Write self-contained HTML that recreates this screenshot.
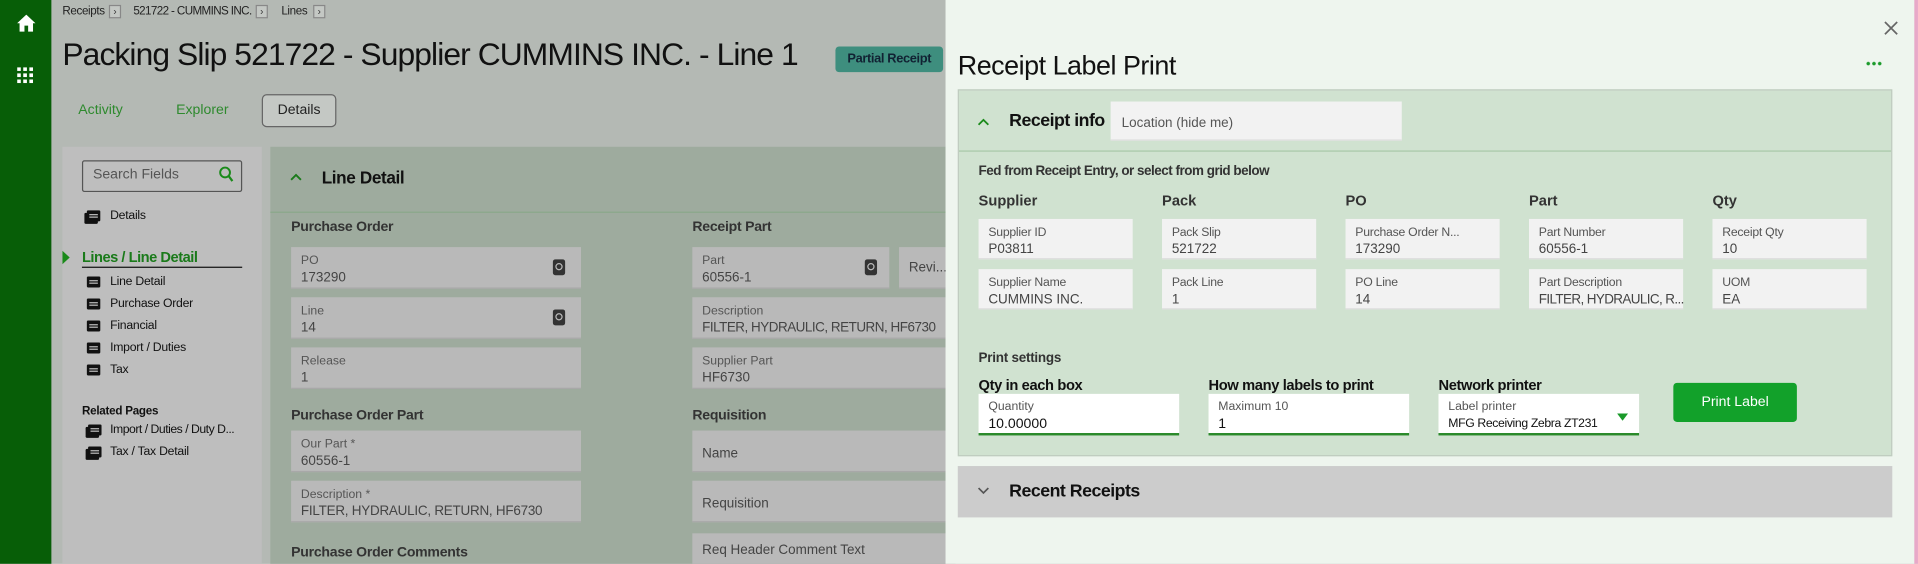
<!DOCTYPE html>
<html><head><meta charset="utf-8"><style>
*{box-sizing:border-box;margin:0;padding:0}
html,body{width:1918px;height:564px;overflow:hidden;background:#fff}
#w{position:absolute;left:0;top:0;width:1568px;height:461px;transform:scale(1.2232);transform-origin:0 0;font-family:"Liberation Sans",sans-serif;background:#b4b9b4;overflow:hidden}
.a{position:absolute;white-space:nowrap}
.nav{left:0;top:0;width:42px;height:461px;background:#075e07}
.bc{font-size:9.5px;color:#222;top:4px;letter-spacing:-.3px}
.chev{width:10px;height:11px;border:1px solid #888;background:#c4c8c4;font-size:8px;line-height:9px;text-align:center;color:#333;top:4px}
.lp{left:51px;top:120px;width:163px;height:341px;background:#bebebe}
.mc{left:221px;top:120px;width:560px;height:341px;background:#9eab9e}
.f{background:#b9b9b9;border-bottom:1px solid #a8a8a8}
.fl{font-size:10px;color:#555}
.fv{font-size:11px;color:#444}
.sh{font-size:11.5px;font-weight:bold;color:#333;letter-spacing:-.2px}
.li{font-size:10px;color:#111;letter-spacing:-.2px}
.ic{width:11px;height:9px;background:#111;border-radius:1px}
.ic:after{content:"";position:absolute;left:2px;top:3px;width:7px;height:1px;background:#bebebe;box-shadow:0 2px 0 #bebebe}
.q{width:10px;height:13px;background:#333;border-radius:2px}
.q:after{content:"";position:absolute;left:2px;top:3px;width:4px;height:4px;border:1px solid #bbb;border-radius:50%}
.modal{left:773px;top:0;width:795px;height:461px;background:#eef5ee;border-right:3px solid #e8a8c8}
.mf{background:#f2f2f2;border-bottom:1px solid #ddd;width:126px;height:33px}
.mf .l{position:absolute;left:8px;top:6px;font-size:10px;color:#555;letter-spacing:-.2px}
.mf .v{position:absolute;left:8px;top:19px;font-size:11px;color:#444}
.in{background:#fff;border-bottom:2px solid #2a8a2a;width:164px;height:34px}
.in .l{position:absolute;left:8px;top:5px;font-size:10px;color:#555}
.in .v{position:absolute;left:8px;top:19px;font-size:11.5px;color:#111}
.ch{font-size:12px;font-weight:bold;color:#333;top:157px}
.lh{font-size:12px;font-weight:bold;color:#111;top:308px;letter-spacing:-.3px}
</style></head><body><div id="w">
<div class="a nav"></div>
<svg class="a" style="left:14px;top:12px" width="15" height="14" viewBox="0 0 15 14"><path d="M7.5 0L0 7h2v7h4V9h3v5h4V7h2z" fill="#fff"/></svg>
<svg class="a" style="left:14px;top:55px" width="13" height="13" viewBox="0 0 13 13" fill="#fff"><rect x="0" y="0" width="3" height="3"/><rect x="5" y="0" width="3" height="3"/><rect x="10" y="0" width="3" height="3"/><rect x="0" y="5" width="3" height="3"/><rect x="5" y="5" width="3" height="3"/><rect x="10" y="5" width="3" height="3"/><rect x="0" y="10" width="3" height="3"/><rect x="5" y="10" width="3" height="3"/><rect x="10" y="10" width="3" height="3"/></svg>
<div class="a bc" style="left:51px">Receipts</div><div class="a chev" style="left:89px">›</div>
<div class="a bc" style="left:109px;letter-spacing:-.5px">521722 - CUMMINS INC.</div><div class="a chev" style="left:209px">›</div>
<div class="a bc" style="left:230px">Lines</div><div class="a chev" style="left:256px">›</div>
<div class="a" style="left:51px;top:29px;font-size:26px;color:#111;letter-spacing:-.75px">Packing Slip 521722 - Supplier CUMMINS INC. - Line 1</div>
<div class="a" style="left:683px;top:38px;width:88px;height:21px;background:#3e8e7e;border-radius:3px;font-size:10.5px;font-weight:bold;color:#123;text-align:center;line-height:21px;letter-spacing:-.3px">Partial Receipt</div>
<div class="a" style="left:64px;top:84px;font-size:11.5px;color:#2e8a2e">Activity</div>
<div class="a" style="left:144px;top:84px;font-size:11.5px;color:#2e8a2e">Explorer</div>
<div class="a" style="left:214px;top:77px;width:61px;height:27px;border:1px solid #666;border-radius:4px;background:#c4c8c4;font-size:11.5px;text-align:center;line-height:25px;color:#222">Details</div>
<div class="a lp"></div>
<div class="a" style="left:67px;top:131px;width:131px;height:26px;border:1px solid #555;border-radius:2px"></div>
<div class="a" style="left:76px;top:137px;font-size:11.5px;color:#555">Search Fields</div>
<svg class="a" style="left:179px;top:136px" width="12" height="13" viewBox="0 0 12 13"><circle cx="5" cy="5" r="4" stroke="#1a8a1a" stroke-width="1.6" fill="none"/><path d="M8 8l3 4" stroke="#1a8a1a" stroke-width="1.8"/></svg>
<div class="a ic" style="left:71px;top:172px;box-shadow:-2px 2px 0 #111"></div><div class="a li" style="left:90px;top:171px">Details</div>
<svg class="a" style="left:51px;top:205px" width="6" height="11"><path d="M0 0l6 5.5L0 11z" fill="#1a8a1a"/></svg>
<div class="a" style="left:67px;top:203px;font-size:12px;font-weight:bold;color:#1a7a1a;letter-spacing:-.4px">Lines / Line Detail</div>
<div class="a" style="left:67px;top:218px;width:131px;height:1px;background:#111"></div>
<div class="a ic" style="left:71px;top:226px"></div><div class="a li" style="left:90px;top:225px">Line Detail</div>
<div class="a ic" style="left:71px;top:244px"></div><div class="a li" style="left:90px;top:243px">Purchase Order</div>
<div class="a ic" style="left:71px;top:262px"></div><div class="a li" style="left:90px;top:261px">Financial</div>
<div class="a ic" style="left:71px;top:280px"></div><div class="a li" style="left:90px;top:279px">Import / Duties</div>
<div class="a ic" style="left:71px;top:298px"></div><div class="a li" style="left:90px;top:297px">Tax</div>
<div class="a" style="left:67px;top:331px;font-size:9.5px;font-weight:bold;color:#111;letter-spacing:-.2px">Related Pages</div>
<div class="a ic" style="left:72px;top:347px;box-shadow:-2px 2px 0 #111"></div><div class="a li" style="left:90px;top:346px;letter-spacing:-.4px">Import / Duties / Duty D...</div>
<div class="a ic" style="left:72px;top:365px;box-shadow:-2px 2px 0 #111"></div><div class="a li" style="left:90px;top:364px">Tax / Tax Detail</div>
<div class="a mc"></div>
<div class="a" style="left:221px;top:173px;width:560px;height:1px;background:#8aa88a"></div>
<svg class="a" style="left:237px;top:141px" width="10" height="7"><path d="M1 6l4-4 4 4" stroke="#1a7a1a" stroke-width="1.5" fill="none"/></svg>
<div class="a" style="left:263px;top:137px;font-size:14px;font-weight:bold;color:#111;letter-spacing:-.3px">Line Detail</div>
<div class="a sh" style="left:238px;top:180px">Purchase Order</div>
<div class="a sh" style="left:566px;top:180px">Receipt Part</div>
<div class="a f" style="left:238px;top:202px;width:237px;height:34px"><span class="a fl" style="left:8px;top:6px">PO</span><span class="a fv" style="left:8px;top:19px">173290</span><span class="a q" style="left:214px;top:10px"></span></div>
<div class="a f" style="left:238px;top:243px;width:237px;height:34px"><span class="a fl" style="left:8px;top:6px">Line</span><span class="a fv" style="left:8px;top:19px">14</span><span class="a q" style="left:214px;top:10px"></span></div>
<div class="a f" style="left:238px;top:284px;width:237px;height:34px"><span class="a fl" style="left:8px;top:6px">Release</span><span class="a fv" style="left:8px;top:19px">1</span></div>
<div class="a sh" style="left:238px;top:334px">Purchase Order Part</div>
<div class="a f" style="left:238px;top:352px;width:237px;height:34px"><span class="a fl" style="left:8px;top:6px">Our Part *</span><span class="a fv" style="left:8px;top:19px">60556-1</span></div>
<div class="a f" style="left:238px;top:393px;width:237px;height:34px"><span class="a fl" style="left:8px;top:6px">Description *</span><span class="a fv" style="left:8px;top:19px;letter-spacing:-.2px">FILTER, HYDRAULIC, RETURN, HF6730</span></div>
<div class="a sh" style="left:238px;top:446px">Purchase Order Comments</div>
<div class="a f" style="left:566px;top:202px;width:161px;height:34px"><span class="a fl" style="left:8px;top:6px">Part</span><span class="a fv" style="left:8px;top:19px">60556-1</span><span class="a q" style="left:141px;top:10px"></span></div>
<div class="a f" style="left:735px;top:202px;width:50px;height:34px"><span class="a fv" style="left:8px;top:11px">Revi...</span></div>
<div class="a f" style="left:566px;top:243px;width:215px;height:34px"><span class="a fl" style="left:8px;top:6px">Description</span><span class="a fv" style="left:8px;top:19px;letter-spacing:-.4px">FILTER, HYDRAULIC, RETURN, HF6730</span></div>
<div class="a f" style="left:566px;top:284px;width:215px;height:34px"><span class="a fl" style="left:8px;top:6px">Supplier Part</span><span class="a fv" style="left:8px;top:19px">HF6730</span></div>
<div class="a sh" style="left:566px;top:334px">Requisition</div>
<div class="a f" style="left:566px;top:352px;width:215px;height:34px"><span class="a fv" style="left:8px;top:13px">Name</span></div>
<div class="a f" style="left:566px;top:393px;width:215px;height:34px"><span class="a fv" style="left:8px;top:13px">Requisition</span></div>
<div class="a f" style="left:566px;top:436px;width:215px;height:30px"><span class="a fv" style="left:8px;top:8px">Req Header Comment Text</span></div>

<div class="a modal"></div>
<svg class="a" style="left:1540px;top:17px" width="12" height="12"><path d="M1 1l10 10M11 1L1 11" stroke="#666" stroke-width="1.4"/></svg>
<div class="a" style="left:783px;top:41px;font-size:22px;color:#111;letter-spacing:-.4px">Receipt Label Print</div>
<div class="a" style="left:1525px;top:50px;width:14px;height:4px;background:radial-gradient(circle,#1a9a2a 1.3px,transparent 1.6px) 0 0/4.7px 4px"></div>
<div class="a" style="left:783px;top:73px;width:764px;height:300px;background:#d0e2d0;border:1px solid #c0ccc0"></div>
<div class="a" style="left:784px;top:123px;width:762px;height:1px;background:#a8c8a8"></div>
<svg class="a" style="left:799px;top:96px" width="10" height="7"><path d="M1 6l4-4 4 4" stroke="#1a8a1a" stroke-width="1.5" fill="none"/></svg>
<div class="a" style="left:825px;top:91px;font-size:14.5px;font-weight:bold;color:#111;letter-spacing:-.4px">Receipt info</div>
<div class="a" style="left:908px;top:83px;width:238px;height:32px;background:#f2f2f2;border-bottom:1px solid #ddd"></div>
<div class="a" style="left:917px;top:95px;font-size:11px;color:#555">Location (hide me)</div>
<div class="a" style="left:800px;top:134px;font-size:11px;font-weight:bold;color:#333;letter-spacing:-.4px">Fed from Receipt Entry, or select from grid below</div>
<div class="a ch" style="left:800px">Supplier</div><div class="a ch" style="left:950px">Pack</div><div class="a ch" style="left:1100px">PO</div><div class="a ch" style="left:1250px">Part</div><div class="a ch" style="left:1400px">Qty</div>
<div class="a mf" style="left:800px;top:179px"><span class="l">Supplier ID</span><span class="v">P03811</span></div>
<div class="a mf" style="left:950px;top:179px"><span class="l">Pack Slip</span><span class="v">521722</span></div>
<div class="a mf" style="left:1100px;top:179px"><span class="l">Purchase Order N...</span><span class="v">173290</span></div>
<div class="a mf" style="left:1250px;top:179px"><span class="l">Part Number</span><span class="v">60556-1</span></div>
<div class="a mf" style="left:1400px;top:179px"><span class="l">Receipt Qty</span><span class="v">10</span></div>
<div class="a mf" style="left:800px;top:220px"><span class="l">Supplier Name</span><span class="v">CUMMINS INC.</span></div>
<div class="a mf" style="left:950px;top:220px"><span class="l">Pack Line</span><span class="v">1</span></div>
<div class="a mf" style="left:1100px;top:220px"><span class="l">PO Line</span><span class="v">14</span></div>
<div class="a mf" style="left:1250px;top:220px"><span class="l">Part Description</span><span class="v" style="letter-spacing:-.5px">FILTER, HYDRAULIC, R...</span></div>
<div class="a mf" style="left:1400px;top:220px"><span class="l">UOM</span><span class="v">EA</span></div>
<div class="a" style="left:800px;top:287px;font-size:11px;color:#333;font-weight:bold;letter-spacing:-.2px">Print settings</div>
<div class="a lh" style="left:800px">Qty in each box</div>
<div class="a lh" style="left:988px">How many labels to print</div>
<div class="a lh" style="left:1176px">Network printer</div>
<div class="a in" style="left:800px;top:322px"><span class="l">Quantity</span><span class="v">10.00000</span></div>
<div class="a in" style="left:988px;top:322px"><span class="l">Maximum 10</span><span class="v">1</span></div>
<div class="a in" style="left:1176px;top:322px"><span class="l">Label printer</span><span class="v" style="font-size:10px;letter-spacing:-.3px">MFG Receiving Zebra ZT231</span><svg class="a" style="left:146px;top:16px" width="9" height="6"><path d="M0 0h9L4.5 6z" fill="#1a9a2a"/></svg></div>
<div class="a" style="left:1368px;top:313px;width:101px;height:32px;background:#12a12a;border-radius:3px;color:#fff;font-size:11.5px;text-align:center;line-height:32px">Print Label</div>
<div class="a" style="left:783px;top:381px;width:764px;height:42px;background:#cccccc"></div>
<svg class="a" style="left:799px;top:398px" width="10" height="7"><path d="M1 1l4 4 4-4" stroke="#555" stroke-width="1.4" fill="none"/></svg>
<div class="a" style="left:825px;top:394px;font-size:14.5px;font-weight:bold;color:#111;letter-spacing:-.4px">Recent Receipts</div>
</div></body></html>
